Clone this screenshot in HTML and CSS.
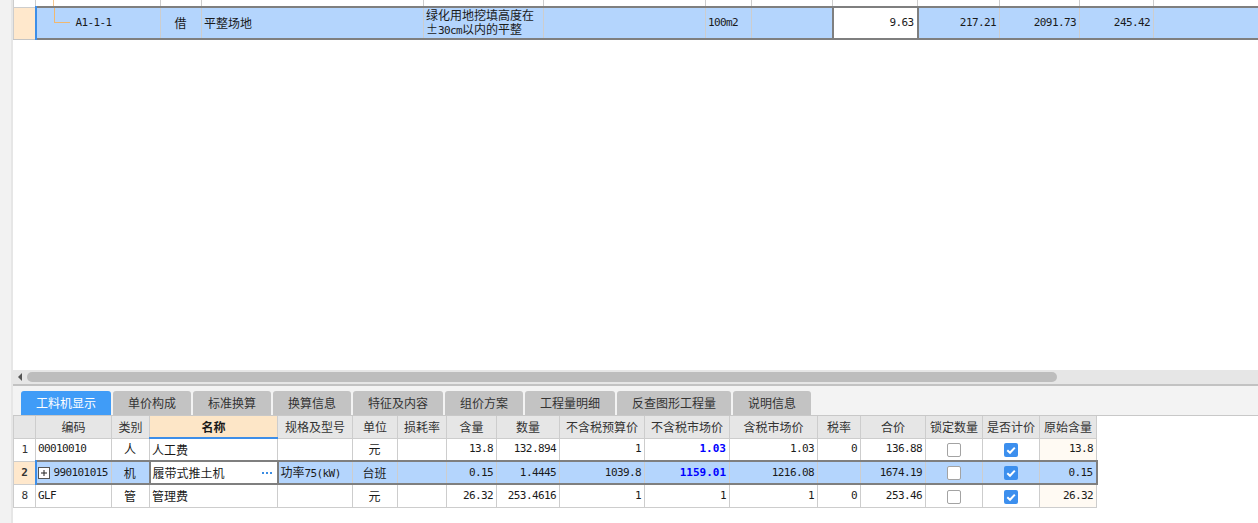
FILE: index.html
```html
<!DOCTYPE html>
<html lang="zh-CN">
<head>
<meta charset="utf-8">
<title>工料机显示</title>
<link rel="stylesheet" href="styles.css">
</head>
<body>
<div class="app">
  <div class="gutter"></div>
  <div class="main">
    <div class="upper">
      <table class="grid top-grid">
        <colgroup>
          <col><col><col><col><col><col><col><col><col><col><col><col><col>
        </colgroup>
        <tr class="partial">
          <td class="ind"></td>
          <td class="code"><i class="tree-v"></i></td>
          <td></td><td></td><td></td><td></td><td></td><td></td><td></td><td></td><td></td><td></td><td class="last"></td>
        </tr>
        <tr class="sel">
          <td class="ind"></td>
          <td class="code"><div class="code-in"><i class="tree-l"></i><span class="mono">A1-1-1</span></div></td>
          <td class="c">借</td>
          <td>平整场地</td>
          <td class="desc"><div class="desc-in">绿化用地挖填高度在<br>±<span class="mono">30cm</span>以内的平整</div></td>
          <td></td>
          <td class="mono">100m2</td>
          <td></td>
          <td class="r mono cur">9.63</td>
          <td class="r mono">217.21</td>
          <td class="r mono">2091.73</td>
          <td class="r mono">245.42</td>
          <td class="last"></td>
        </tr>
      </table>
    </div>
    <div class="hscroll">
      <i class="arrow"></i>
      <div class="thumb"></div>
    </div>
    <div class="tabs">
      <div class="tab active w90">工料机显示</div>
      <div class="tab w78">单价构成</div>
      <div class="tab w78">标准换算</div>
      <div class="tab w78">换算信息</div>
      <div class="tab w90">特征及内容</div>
      <div class="tab w78">组价方案</div>
      <div class="tab w90">工程量明细</div>
      <div class="tab w114">反查图形工程量</div>
      <div class="tab w78">说明信息</div>
    </div>
    <table class="grid bot-grid">
      <colgroup>
        <col><col><col><col><col><col><col><col><col><col><col><col><col><col><col><col><col>
      </colgroup>
      <tr class="head">
        <th></th><th>编码</th><th>类别</th><th class="hname">名称</th><th>规格及型号</th><th>单位</th><th>损耗率</th><th>含量</th><th>数量</th><th>不含税预算价</th><th>不含税市场价</th><th>含税市场价</th><th>税率</th><th>合价</th><th>锁定数量</th><th>是否计价</th><th>原始含量</th>
      </tr>
      <tr>
        <td class="c mono ind">1</td>
        <td class="mono">00010010</td>
        <td class="c">人</td>
        <td>人工费</td>
        <td></td>
        <td class="c">元</td>
        <td></td>
        <td class="r mono">13.8</td>
        <td class="r mono">132.894</td>
        <td class="r mono">1</td>
        <td class="r mono blue">1.03</td>
        <td class="r mono">1.03</td>
        <td class="r mono">0</td>
        <td class="r mono">136.88</td>
        <td class="c"><span class="cb"></span></td>
        <td class="c"><svg class="cbon" width="14" height="14" viewBox="0 0 14 14"><rect width="14" height="14" rx="2" fill="#3c8fee"/><path d="M3.3 7.3 L6 9.8 L10.8 4.6" stroke="#fff" stroke-width="2" fill="none"/></svg></td>
        <td class="r mono orig">13.8</td>
      </tr>
      <tr class="sel">
        <td class="c mono ind">2</td>
        <td class="mono"><div class="code-in2"><svg class="plus" width="12" height="12" viewBox="0 0 12 12"><rect x="0.5" y="0.5" width="11" height="11" fill="#fff" stroke="#555"/><path d="M3 6 H9 M6 3 V9" stroke="#222" stroke-width="1"/></svg><span>990101015</span></div></td>
        <td class="c">机</td>
        <td class="cur"><div class="name-in"><span>履带式推土机</span><span class="dots"><i></i><i></i><i></i></span></div></td>
        <td>功率<span class="mono">75(kW)</span></td>
        <td class="c">台班</td>
        <td></td>
        <td class="r mono">0.15</td>
        <td class="r mono">1.4445</td>
        <td class="r mono">1039.8</td>
        <td class="r mono blue">1159.01</td>
        <td class="r mono">1216.08</td>
        <td class="r mono"></td>
        <td class="r mono">1674.19</td>
        <td class="c"><span class="cb"></span></td>
        <td class="c"><svg class="cbon" width="14" height="14" viewBox="0 0 14 14"><rect width="14" height="14" rx="2" fill="#3c8fee"/><path d="M3.3 7.3 L6 9.8 L10.8 4.6" stroke="#fff" stroke-width="2" fill="none"/></svg></td>
        <td class="r mono orig">0.15</td>
      </tr>
      <tr>
        <td class="c mono ind">8</td>
        <td class="mono">GLF</td>
        <td class="c">管</td>
        <td>管理费</td>
        <td></td>
        <td class="c">元</td>
        <td></td>
        <td class="r mono">26.32</td>
        <td class="r mono">253.4616</td>
        <td class="r mono">1</td>
        <td class="r mono">1</td>
        <td class="r mono">1</td>
        <td class="r mono">0</td>
        <td class="r mono">253.46</td>
        <td class="c"><span class="cb"></span></td>
        <td class="c"><svg class="cbon" width="14" height="14" viewBox="0 0 14 14"><rect width="14" height="14" rx="2" fill="#3c8fee"/><path d="M3.3 7.3 L6 9.8 L10.8 4.6" stroke="#fff" stroke-width="2" fill="none"/></svg></td>
        <td class="r mono orig">26.32</td>
      </tr>
    </table>
  </div>
</div>
</body>
</html>
```

FILE: styles.css
```css
* { box-sizing: border-box; }
html, body { margin: 0; padding: 0; }
body {
  width: 1258px;
  height: 523px;
  overflow: hidden;
  background: #fff;
  font-family: "Noto Sans CJK SC", "Noto Sans", sans-serif;
  font-size: 12px;
  color: #1a1a1a;
}
.app { display: flex; height: 523px; }
.gutter {
  width: 13px;
  flex: none;
  background: #f2f2f2;
  border-right: 2px solid #e6e6e6;
}
.main {
  flex: 1;
  min-width: 0;
  display: flex;
  flex-direction: column;
}
.upper { height: 370px; flex: none; overflow: hidden; }

.grid { border-collapse: collapse; table-layout: fixed; }
.grid td, .grid th {
  border: 1px solid #cdcdcd;
  padding: 0 3px 0 2px;
  white-space: nowrap;
  overflow: hidden;
  line-height: 14px;
  font-weight: normal;
}
.mono {
  font-family: "DejaVu Sans Mono", monospace;
  font-size: 11px;
  letter-spacing: -0.6px;
}
.c { text-align: center; }
.r { text-align: right; }

/* upper grid */
.top-grid { width: 1245px; }
.top-grid col:nth-child(1) { width: 22px; }
.top-grid col:nth-child(2) { width: 125px; }
.top-grid col:nth-child(3) { width: 41px; }
.top-grid col:nth-child(4) { width: 222px; }
.top-grid col:nth-child(5) { width: 120px; }
.top-grid col:nth-child(6) { width: 162px; }
.top-grid col:nth-child(7) { width: 46px; }
.top-grid col:nth-child(8) { width: 81px; }
.top-grid col:nth-child(9) { width: 85px; }
.top-grid col:nth-child(10) { width: 82px; }
.top-grid col:nth-child(11) { width: 80px; }
.top-grid col:nth-child(12) { width: 74px; }
.top-grid col:nth-child(13) { width: 105px; }
.top-grid .partial td {
  height: 4px;
  border-top: none;
  padding: 0;
  font-size: 0;
  line-height: 0;
}
.top-grid td.last { border-right: none; }
.tree-v {
  display: block;
  height: 6px;
  margin-left: 17px;
  border-left: 1px solid #f6c890;
}
.top-grid .sel td {
  height: 31px;
  background: #b4d5fd;
  border-top: 2px solid #7f7f7f;
  border-bottom: 2px solid #7f7f7f;
}
.top-grid .sel td.ind {
  background: #ffe8cc;
  border-top: 1px solid #c4c4c4;
  border-bottom: 1px solid #c4c4c4;
  border-right: 2px solid #3d8ee8;
}
.top-grid .sel td.code { padding: 0; vertical-align: top; }
.code-in { display: flex; align-items: center; height: 29px; }
.tree-l {
  flex: none;
  align-self: flex-start;
  width: 16px;
  height: 15px;
  margin-left: 17px;
  margin-right: 6px;
  border-left: 1px solid #f0b870;
  border-bottom: 1px solid #f0b870;
}
.top-grid .sel td.desc {
  vertical-align: top;
  padding: 0 0 0 2px;
}
.desc-in {
  white-space: nowrap;
  line-height: 14px;
}
.top-grid .sel td.cur {
  background: #fff;
  border-left: 2px solid #7f7f7f;
  border-right: 2px solid #7f7f7f;
}

/* scrollbar */
.hscroll {
  height: 14px;
  flex: none;
  background: #e6e6e6;
  display: flex;
  align-items: center;
}
.arrow {
  width: 0;
  height: 0;
  margin-left: 5px;
  border-right: 4px solid #555;
  border-top: 4px solid transparent;
  border-bottom: 4px solid transparent;
}
.thumb {
  margin-left: 5px;
  width: 1030px;
  height: 10px;
  border-radius: 5px;
  background: #bdbdbd;
}

/* tabs */
.tabs {
  flex: none;
  display: flex;
  gap: 2px;
  height: 32px;
  padding: 5px 0 0 8px;
  background: #f3f3f3;
  border-top: 2px solid #c2c2c2;
  border-bottom: 1px solid #c8c8c8;
  align-items: flex-end;
}
.tab {
  height: 24px;
  line-height: 24px;
  text-align: center;
  background: #c3c3c3;
  color: #333;
  border-radius: 3px 3px 0 0;
}
.tab.active { background: #409cf7; color: #fff; }
.w90 { width: 90px; }
.w78 { width: 78px; }
.w114 { width: 114px; }

/* lower grid */
.bot-grid { width: 1083px; }
.bot-grid col:nth-child(1) { width: 22px; }
.bot-grid col:nth-child(2) { width: 76px; }
.bot-grid col:nth-child(3) { width: 38px; }
.bot-grid col:nth-child(4) { width: 128px; }
.bot-grid col:nth-child(5) { width: 75px; }
.bot-grid col:nth-child(6) { width: 45px; }
.bot-grid col:nth-child(7) { width: 49px; }
.bot-grid col:nth-child(8) { width: 50px; }
.bot-grid col:nth-child(9) { width: 63px; }
.bot-grid col:nth-child(10) { width: 85px; }
.bot-grid col:nth-child(11) { width: 85px; }
.bot-grid col:nth-child(12) { width: 88px; }
.bot-grid col:nth-child(13) { width: 43px; }
.bot-grid col:nth-child(14) { width: 65px; }
.bot-grid col:nth-child(15) { width: 57px; }
.bot-grid col:nth-child(16) { width: 57px; }
.bot-grid col:nth-child(17) { width: 57px; }
.bot-grid th {
  height: 22px;
  background: #e6e6e6;
  color: #333;
  text-align: center;
  border-top: none;
  padding: 0;
}
.bot-grid th.hname {
  background: #fde6c7;
  font-weight: bold;
  color: #1a1a1a;
  border-bottom: 2px solid #3d8ee8;
}
.bot-grid td { height: 23px; }
.bot-grid td.ind { padding: 0; color: #333; }
.bot-grid td.orig { background: #fffaf3; }
.grid td.blue { color: #0000ff; font-weight: bold; letter-spacing: 0; }
.bot-grid tr.sel td {
  background: #b4d5fd;
  border-top: 2px solid #7f7f7f;
  border-bottom: 2px solid #7f7f7f;
}
.bot-grid tr.sel td.ind {
  background: #ffe8cc;
  font-weight: bold;
  border-top: 1px solid #cdcdcd;
  border-bottom: 1px solid #cdcdcd;
  border-right: 2px solid #3d8ee8;
}
.bot-grid tr.sel td.cur {
  background: #fff;
  border-left: 2px solid #7f7f7f;
  border-right: 2px solid #7f7f7f;
  padding-right: 0;
}
.bot-grid tr.sel td:last-child { border-right: 2px solid #7f7f7f; }
.code-in2 { display: flex; align-items: center; gap: 4px; margin-left: -1px; }
.plus { flex: none; display: block; }
.name-in { display: flex; align-items: center; justify-content: space-between; }
.dots { display: flex; gap: 2px; margin-right: 5px; }
.dots i { width: 2px; height: 2px; background: #3b8de3; }
.cb {
  display: inline-block;
  width: 14px;
  height: 14px;
  border: 1px solid #a3a3a3;
  border-radius: 2px;
  background: #fff;
  vertical-align: middle;
}
.cbon { display: inline-block; vertical-align: middle; }
```
